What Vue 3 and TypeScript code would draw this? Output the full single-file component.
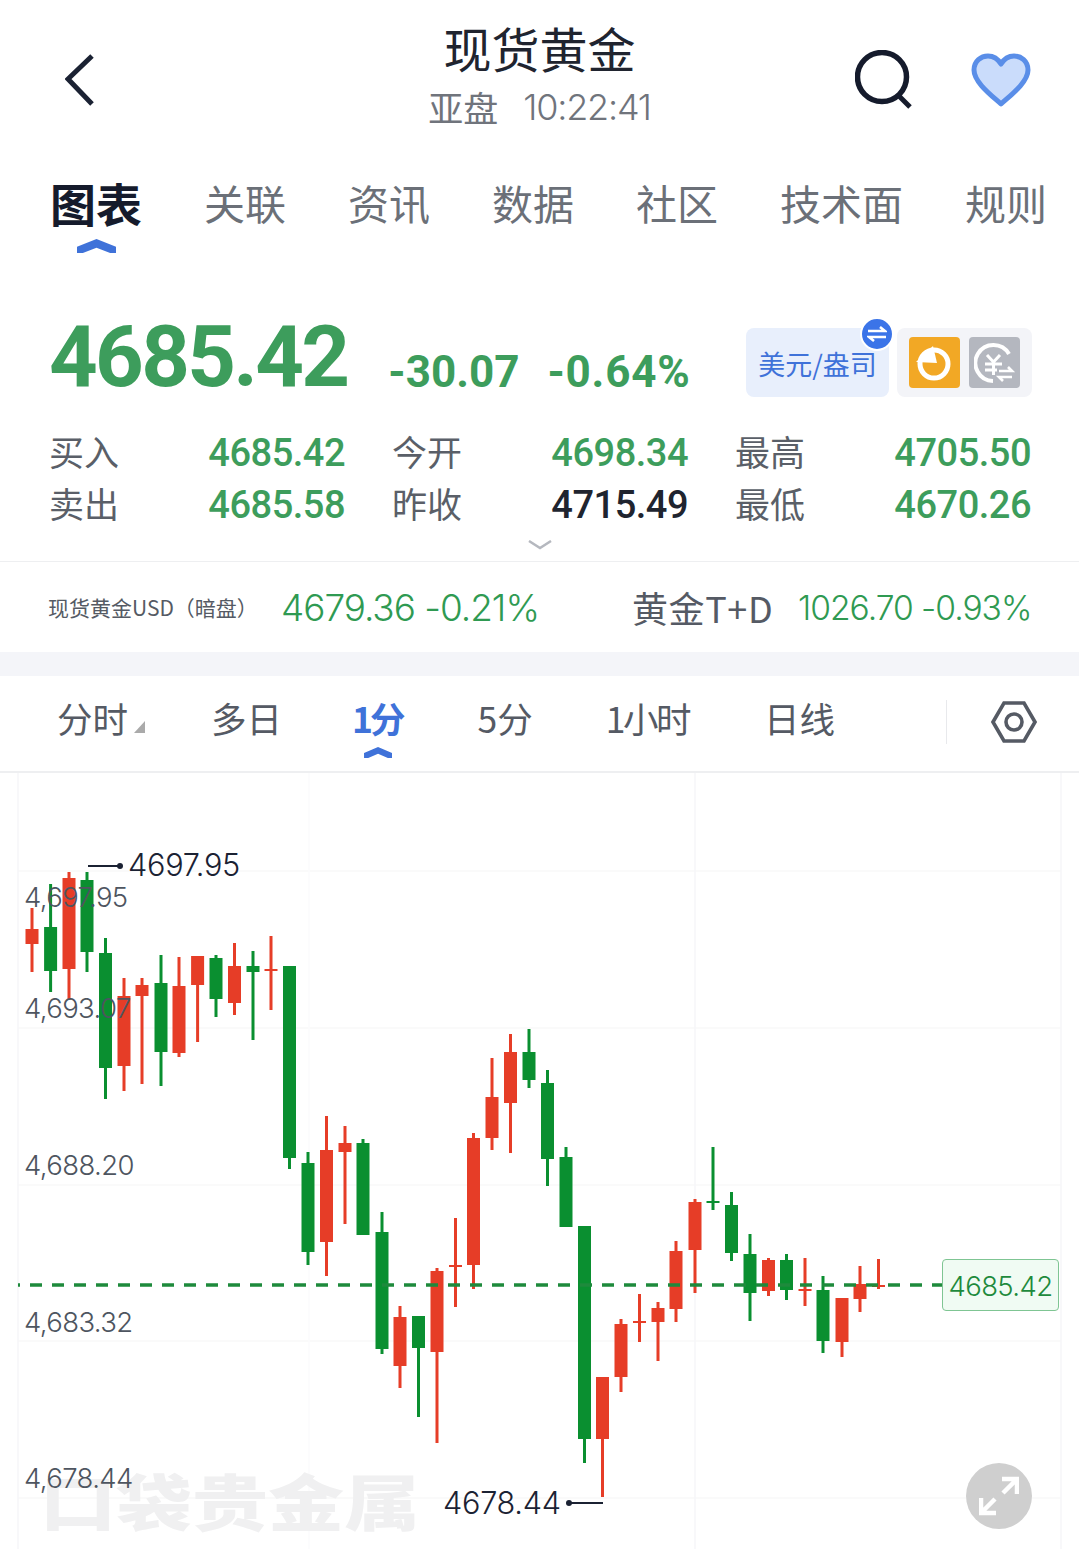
<template>
  <div class="page">
    <header class="top">
      <button class="back" aria-label="back">
        <svg width="30" height="52" viewBox="0 0 30 52"><path d="M27 2 3 25l24 25" fill="none" stroke="#1b2233" stroke-width="5" /></svg>
      </button>
      <div class="title">
        <h1>现货黄金</h1>
        <p><span>亚盘</span><span class="time">10:22:41</span></p>
      </div>
      <div class="actions">
        <svg width="60" height="60" viewBox="0 0 60 60"><circle cx="27" cy="27" r="24.5" fill="none" stroke="#151b2c" stroke-width="5.5" /><path d="M43 45l12 12" stroke="#151b2c" stroke-width="5" /></svg>
        <svg width="60" height="54" viewBox="0 0 60 54"><path d="M30 51C20 42 3 29 3 17 3 8 10 3 17 3c6 0 10 3 13 8 3-5 7-8 13-8 7 0 14 5 14 14 0 12-17 25-27 34z" fill="#cadcfb" stroke="#5a8ee8" stroke-width="5" stroke-linejoin="round" /></svg>
      </div>
    </header>

    <nav class="tabs">
      <span v-for="t in tabs" :key="t" :class="['tab', { active: t === '图表' }]">{{ t }}</span>
    </nav>

    <section class="quote">
      <div class="price">4685.42</div>
      <div class="change">-30.07</div>
      <div class="change pct">-0.64%</div>
      <div class="unit">
        美元/盎司
        <span class="swap">
          <svg width="20" height="16" viewBox="0 0 20 16"><path d="M1 5h17l-5-4M19 11H2l5 4" fill="none" stroke="#fff" stroke-width="2.6" /></svg>
        </span>
      </div>
      <div class="modes">
        <span class="mode orange">
          <svg width="40" height="40" viewBox="0 0 40 40"><circle cx="19" cy="21" r="14" fill="none" stroke="#fff" stroke-width="5" /><path d="M1 19 18 3l4 17z" fill="#fff" /></svg>
        </span>
        <span class="mode grey">
          <svg width="42" height="42" viewBox="0 0 42 42"><path d="M35 12A18 18 0 1 0 19 39" fill="none" stroke="#fff" stroke-width="4" /><path d="M13 13l6.500 7 6.500-7M11 22h17M11 28h17M19.500 20v13" fill="none" stroke="#fff" stroke-width="3" /><rect x="23" y="24" width="17" height="16" fill="#b4b7bf" /><path d="M25 29h13l-4-4M38 35H25l4 4" fill="none" stroke="#fff" stroke-width="2.6" /></svg>
        </span>
      </div>
    </section>

    <section class="stats">
      <div v-for="s in stats" :key="s.label" class="stat">
        <span class="label">{{ s.label }}</span>
        <span :class="['num', { dark: s.dark }]">{{ s.value }}</span>
      </div>
    </section>

    <div class="more">
      <svg width="24" height="10" viewBox="0 0 24 10"><path d="M1 1l11 7 11-7" fill="none" stroke="#b5b8bf" stroke-width="2.5" /></svg>
    </div>

    <section class="related">
      <span class="rel-small">现货黄金USD（暗盘）</span>
      <span class="rel-val first">4679.36 -0.21%</span>
      <span class="rel-big">黄金T+D</span>
      <span class="rel-val second">1026.70 -0.93%</span>
    </section>

    <div class="band"></div>

    <nav class="periods">
      <span v-for="p in periods" :key="p" :class="['period', { active: p === '1分' }]">
        {{ p }}<i v-if="p === '分时'" class="tri"></i>
      </span>
      <span class="divider"></span>
      <svg class="hex" width="46" height="42" viewBox="0 0 46 42"><path d="M13 2h20l11 19-11 19H13L2 21z" fill="none" stroke="#555a64" stroke-width="3.6" /><circle cx="23" cy="21" r="8" fill="none" stroke="#555a64" stroke-width="3.6" /></svg>
    </nav>

    <section class="chart">
      <svg class="plot" width="1079" height="776" viewBox="0 773 1079 776">
        <line v-for="y in gridY" :key="y" x1="18" x2="1061" :y1="y" :y2="y" stroke="#f8f8f9" stroke-width="1.5" />
        <line v-for="x in gridX" :key="x" :x1="x" :x2="x" y1="773" y2="1549" stroke="#f6f6f8" stroke-width="1.5" />
        <line x1="309" x2="309" y1="773" y2="1549" stroke="#fbfbfc" stroke-width="1.5" />

        <text class="mark" transform="translate(40 1526) scale(1 .8)">口袋贵金属</text>

        <g v-for="c in candles" :key="c.x">
          <rect :x="c.x - 1.5" :y="c.high" width="3" :height="c.low - c.high" :fill="c.color" />
          <rect :x="c.x - 6.5" :y="c.top" width="13" :height="c.bottom - c.top" :fill="c.color" />
        </g>

        <line x1="18" x2="942" y1="1285" y2="1285" stroke="#1e8a3c" stroke-width="3.5" stroke-dasharray="12 10" stroke-dashoffset="10" />

        <text v-for="a in axis" :key="a.y" x="24" :y="a.y" class="axis">{{ a.text }}</text>

        <path d="M88 866h32" stroke="#1b2233" stroke-width="2" />
        <circle cx="120" cy="866" r="3" fill="#1b2233" />
        <text x="128" y="876" class="extreme">4697.95</text>
        <text x="443" y="1514" class="extreme">4678.44</text>
        <circle cx="569" cy="1503" r="3" fill="#1b2233" />
        <path d="M569 1503h34" stroke="#1b2233" stroke-width="2" />
      </svg>

      <div class="last">4685.42</div>
      <button class="expand" aria-label="expand">
        <svg width="40" height="40" viewBox="0 0 40 40"><path d="M23 3h15v15M38 3 24 17M17 37H2V22M2 37l14-14" fill="none" stroke="#fff" stroke-width="4.5" /></svg>
      </button>
    </section>
  </div>
</template>

<script setup lang="ts">
const UP = '#e63d27';
const DOWN = '#0a8f30';

const tabs = ['图表', '关联', '资讯', '数据', '社区', '技术面', '规则'];
const periods = ['分时', '多日', '1分', '5分', '1小时', '日线'];

const stats = [
  { label: '买入', value: '4685.42' },
  { label: '今开', value: '4698.34' },
  { label: '最高', value: '4705.50' },
  { label: '卖出', value: '4685.58' },
  { label: '昨收', value: '4715.49', dark: true },
  { label: '最低', value: '4670.26' },
];

const gridY = [871, 1028, 1185, 1341, 1498];
const gridX = [18, 695, 1061];

const axis = [
  { y: 907, text: '4,697.95' },
  { y: 1018, text: '4,693.07' },
  { y: 1175, text: '4,688.20' },
  { y: 1332, text: '4,683.32' },
  { y: 1488, text: '4,678.44' },
];

// x, high, low, body top, body bottom, rising
const raw: [number, number, number, number, number, boolean][] = [
  [32, 908, 972, 929, 944, true],
  [50.6, 884, 992, 927, 971, false],
  [69, 872, 1000, 878, 969, true],
  [87, 872, 972, 880, 952, false],
  [105.5, 938, 1099, 953, 1068, false],
  [124, 978, 1091, 996, 1066, true],
  [142, 978, 1084, 985, 996, true],
  [161, 955, 1086, 983, 1052, false],
  [179, 957, 1057, 986, 1053, true],
  [197.6, 956, 1042, 956, 985, true],
  [216, 955, 1017, 958, 999, false],
  [234.5, 943, 1015, 966, 1003, true],
  [253, 951, 1040, 966, 972, false],
  [271, 936, 1010, 969, 971, true],
  [289.5, 966, 1169, 966, 1158, false],
  [308, 1152, 1265, 1163, 1252, false],
  [326.5, 1116, 1276, 1150, 1242, true],
  [345, 1126, 1224, 1143, 1152, true],
  [363, 1139, 1235, 1143, 1235, false],
  [382, 1212, 1354, 1232, 1349, false],
  [400, 1306, 1388, 1317, 1366, true],
  [418.5, 1316, 1417, 1316, 1348, false],
  [437, 1268, 1443, 1271, 1352, true],
  [455.5, 1218, 1307, 1265, 1267, true],
  [473.5, 1133, 1289, 1138, 1265, true],
  [492, 1058, 1150, 1097, 1138, true],
  [510.5, 1034, 1153, 1052, 1103, true],
  [529, 1029, 1088, 1052, 1080, false],
  [547.5, 1070, 1186, 1083, 1159, false],
  [566, 1147, 1227, 1157, 1227, false],
  [584.5, 1226, 1463, 1226, 1439, false],
  [602.5, 1377, 1497, 1377, 1439, true],
  [621, 1319, 1392, 1324, 1377, true],
  [639.5, 1294, 1342, 1321, 1323, true],
  [658, 1302, 1361, 1308, 1322, true],
  [676, 1241, 1322, 1251, 1309, true],
  [695, 1199, 1293, 1202, 1250, true],
  [713, 1147, 1210, 1201, 1203, false],
  [731.5, 1192, 1261, 1205, 1253, false],
  [750, 1234, 1321, 1254, 1293, false],
  [768.5, 1258, 1296, 1260, 1291, true],
  [786.5, 1254, 1300, 1260, 1290, false],
  [805, 1258, 1306, 1289, 1291, true],
  [823, 1276, 1353, 1290, 1341, false],
  [842, 1298, 1357, 1298, 1342, true],
  [860, 1266, 1312, 1284, 1299, true],
  [878.5, 1259, 1289, 1285, 1287, true],
];

const candles = raw.map(([x, high, low, top, bottom, rising]) => ({
  x,
  high,
  low,
  top,
  bottom,
  color: rising ? UP : DOWN,
}));
</script>

<style>
html,
body {
  margin: 0;
  background: #fff;
}
</style>

<style scoped>
.page {
  position: relative;
  width: 1079px;
  height: 1549px;
  overflow: hidden;
  background: #fff;
  font-family: "Noto Sans CJK SC", "Noto Sans", sans-serif;
  color: #1b2233;
}

button {
  padding: 0;
  border: none;
  background: none;
}

.top {
  display: grid;
  grid-template-columns: 1fr auto 1fr;
  align-items: center;
  height: 157px;
}

.back {
  display: flex;
  padding: 0 0 0 65px;
  margin-top: 3px;
}

.title {
  text-align: center;
  margin-top: -5px;
}

h1 {
  margin: 0;
  font-size: 48px;
  font-weight: 400;
  line-height: 58px;
  color: #20242f;
}

.title p {
  display: flex;
  gap: 25px;
  justify-content: center;
  margin: 4px 0 0;
  font-size: 35px;
  line-height: 54px;
  color: #70747c;
}

.time {
  font-family: Inter, sans-serif;
  font-size: 36px;
  font-weight: 300;
  letter-spacing: -1.2px;
}

.actions {
  display: flex;
  justify-content: flex-end;
  align-items: center;
  gap: 56px;
  padding-right: 48px;
  margin-top: 3px;
}

.tabs {
  display: flex;
  gap: 62px;
  align-items: center;
  height: 90px;
  padding-left: 50px;
}

.tab {
  position: relative;
  font-size: 41px;
  color: #6b7078;
  white-space: nowrap;
}

.tab.active {
  font-size: 46px;
  font-weight: 700;
  color: #151b2c;
}

.tab.active::after {
  content: "";
  position: absolute;
  left: 27px;
  bottom: -18px;
  width: 39px;
  height: 14px;
  background: #3f72d9;
  clip-path: polygon(50% 0, 100% 55%, 100% 100%, 85% 100%, 50% 62%, 15% 100%, 0 100%, 0 55%);
}

.period.active::after {
  content: "";
  position: absolute;
  left: 12px;
  bottom: -15px;
  width: 28px;
  height: 11px;
  background: #3f72d9;
  clip-path: polygon(50% 0, 100% 55%, 100% 100%, 85% 100%, 50% 62%, 15% 100%, 0 100%, 0 55%);
}

.quote {
  display: flex;
  align-items: flex-start;
  height: 96px;
  margin-top: 69px;
  padding-left: 49px;
}

.price {
  font-family: Roboto, sans-serif;
  font-size: 85px;
  font-weight: 700;
  line-height: 74px;
  color: #3d9d5c;
  letter-spacing: -2.7px;
  margin-top: 4px;
}

.change {
  font-family: Roboto, sans-serif;
  font-size: 44px;
  font-weight: 700;
  line-height: 44px;
  color: #3d9d5c;
  margin: 34px 0 0 41px;
}

.change.pct {
  margin-left: 28px;
  letter-spacing: 0.8px;
}

.unit {
  position: absolute;
  left: 746px;
  top: 328px;
  display: flex;
  align-items: center;
  justify-content: center;
  width: 143px;
  height: 69px;
  border-radius: 8px;
  background: #e8effc;
  color: #3f72d9;
  font-size: 27px;
  padding-top: 2px;
  box-sizing: border-box;
}

.swap {
  position: absolute;
  right: -5px;
  top: -11px;
  display: flex;
  align-items: center;
  justify-content: center;
  width: 30px;
  height: 30px;
  border: 2px solid #fff;
  border-radius: 50%;
  background: #3b74e8;
}

.modes {
  position: absolute;
  left: 897px;
  top: 328px;
  display: flex;
  gap: 9px;
  padding: 9px 12px;
  border-radius: 8px;
  background: #f3f4f8;
}

.mode {
  display: flex;
  align-items: center;
  justify-content: center;
  width: 51px;
  height: 51px;
  border-radius: 4px;
}

.orange {
  background: #f2a825;
}

.grey {
  background: #b4b7bf;
}

.stats {
  display: grid;
  grid-template-columns: repeat(3, 296px);
  column-gap: 47px;
  padding-left: 49px;
  margin-top: 12px;
}

.stat {
  display: flex;
  justify-content: space-between;
  align-items: center;
  height: 52px;
}

.label {
  font-size: 35px;
  color: #5a5f68;
}

.num {
  margin-top: 5px;
  font-family: Roboto, sans-serif;
  font-size: 38px;
  font-weight: 500;
  letter-spacing: -0.5px;
  color: #3d9d5c;
}

.num.dark {
  color: #20242f;
}

.more {
  display: flex;
  justify-content: center;
  height: 33px;
  padding-top: 12px;
  box-sizing: border-box;
}

.related {
  display: flex;
  align-items: center;
  height: 91px;
  border-top: 1px solid #eeeff1;
  box-sizing: border-box;
  padding-left: 48px;
}

.rel-small {
  width: 233px;
  font-size: 21px;
  color: #555a64;
  white-space: nowrap;
}

.rel-val {
  font-family: Inter, sans-serif;
  font-weight: 300;
  color: #2f9a52;
  white-space: nowrap;
}

.rel-val.first {
  font-size: 36.9px;
  letter-spacing: -1px;
  width: 351px;
}

.rel-val.second {
  font-size: 33.6px;
  letter-spacing: -1px;
  margin-left: 25px;
}

.rel-big {
  width: 141px;
  font-size: 36px;
  letter-spacing: 0.6px;
  color: #555a64;
  white-space: nowrap;
}

.band {
  height: 24px;
  background: #f4f5f9;
}

.periods {
  position: relative;
  display: flex;
  align-items: center;
  gap: 75px;
  height: 97px;
  padding: 0 0 12px 57px;
  border-bottom: 2px solid #eeeff1;
  box-sizing: border-box;
}

.period {
  position: relative;
  font-size: 35.5px;
  color: #555a64;
  white-space: nowrap;
}

.period:first-child {
  margin-right: 8px;
}

.period:nth-child(5) {
  margin-left: -2px;
  letter-spacing: -2.5px;
}

.period.active {
  margin-left: -5px;
  font-weight: 700;
  letter-spacing: -3px;
  color: #3f72d9;
}

.tri {
  position: absolute;
  left: 77px;
  bottom: 10px;
  width: 11px;
  height: 12px;
  background: #aaa;
  clip-path: polygon(100% 0, 100% 100%, 0 100%);
}

.divider {
  position: absolute;
  left: 946px;
  top: 24px;
  width: 1px;
  height: 44px;
  background: #e8e9ec;
}

.hex {
  position: absolute;
  left: 991px;
  top: 25px;
}

.chart {
  position: relative;
  height: 776px;
}

.plot {
  display: block;
  font-family: Inter, sans-serif;
}

.axis {
  font-size: 27.5px;
  font-weight: 300;
  fill: #4e5560;
  letter-spacing: -0.6px;
}

.extreme {
  font-size: 30.7px;
  font-weight: 300;
  fill: #1b2233;
  letter-spacing: -0.3px;
}

.mark {
  font-family: "Noto Sans CJK SC", sans-serif;
  font-size: 76px;
  font-weight: 900;
  fill: #f0f0f1;
}

.last {
  position: absolute;
  left: 942px;
  top: 486px;
  width: 117px;
  height: 52px;
  line-height: 52px;
  text-align: center;
  box-sizing: border-box;
  border: 1.5px solid #7fc593;
  border-radius: 4px;
  background: #f0fbf3;
  color: #1e8a3c;
  font-family: Inter, sans-serif;
  font-weight: 300;
  font-size: 27.5px;
  letter-spacing: -0.6px;
}

.expand {
  position: absolute;
  left: 966px;
  top: 690px;
  display: flex;
  align-items: center;
  justify-content: center;
  width: 66px;
  height: 66px;
  border-radius: 50%;
  background: #cfcfcf;
}
</style>
